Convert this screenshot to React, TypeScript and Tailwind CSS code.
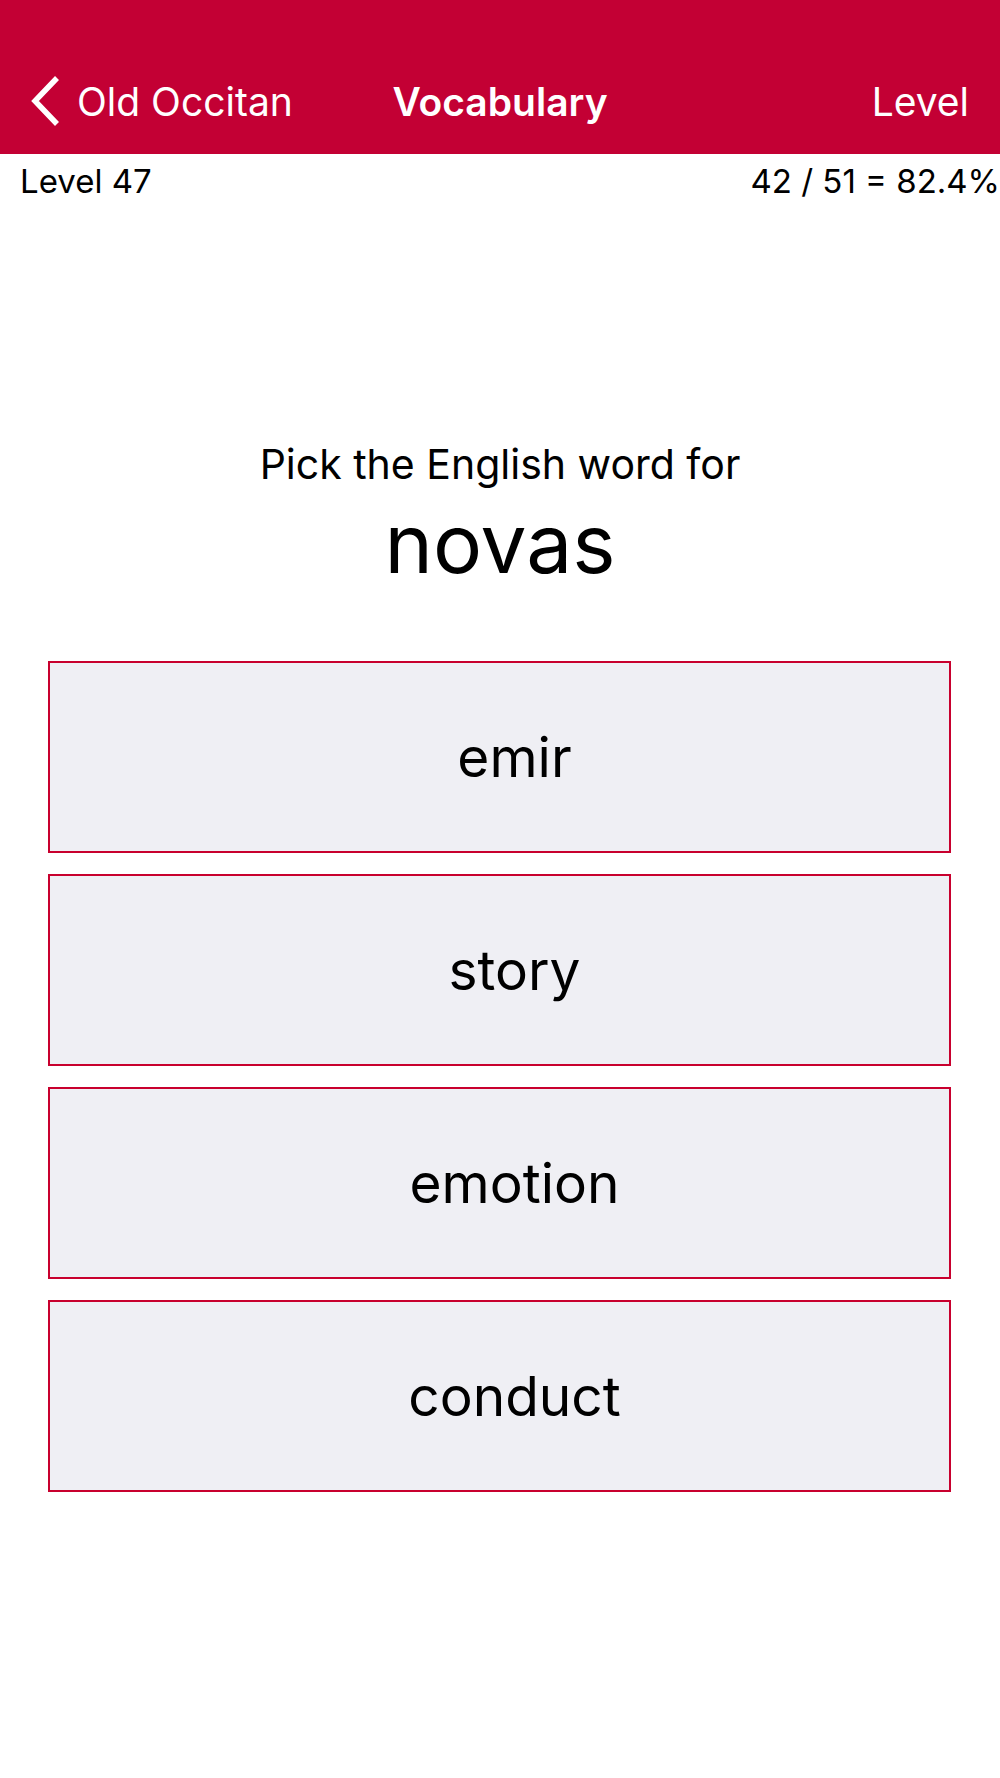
import React from "react";

const options = ["emir", "story", "emotion", "conduct"];

export default function App() {
  return (
    <div className="w-[1000px] h-[1778px] bg-white flex flex-col" style={{ fontFamily: "Inter, 'Noto Sans', sans-serif" }}>
      <div className="h-[154px] bg-[#c30034] pt-[48px] shrink-0">
        <div className="h-[106px] flex items-center justify-between relative pl-[30px] pr-[31px] text-white">
          <div className="flex items-center">
            <svg width="32" height="52" viewBox="0 0 32 52" className="mr-[15px]">
              <path d="M27 3 L5 26 L27 49" fill="none" stroke="white" strokeWidth="5.5" strokeLinecap="butt" strokeLinejoin="miter" />
            </svg>
            <span className="text-[39px] leading-none">Old Occitan</span>
          </div>
          <span className="absolute left-1/2 -translate-x-1/2 text-[39px] font-semibold leading-none">Vocabulary</span>
          <span className="text-[39px] leading-none">Level</span>
        </div>
      </div>
      <div className="flex justify-between pl-[20px] pr-0 pt-[11px] text-[33px] leading-none text-black">
        <span>Level 47</span>
        <span>42 / 51 = 82.4%</span>
      </div>
      <div className="mt-[246px] flex flex-col items-center text-black">
        <span className="text-[41px] leading-none">Pick the English word for</span>
        <span className="text-[82px] leading-none mt-[18px]">novas</span>
      </div>
      <div className="mt-[76px] flex flex-col gap-[21px] pl-[48px] pr-[49px]">
        {options.map((o) => (
          <div key={o} className="h-[192px] bg-[#efeff4] border-2 border-[#c8002e] flex items-center justify-center pl-[30px] text-[55px] text-black">
            {o}
          </div>
        ))}
      </div>
    </div>
  );
}
